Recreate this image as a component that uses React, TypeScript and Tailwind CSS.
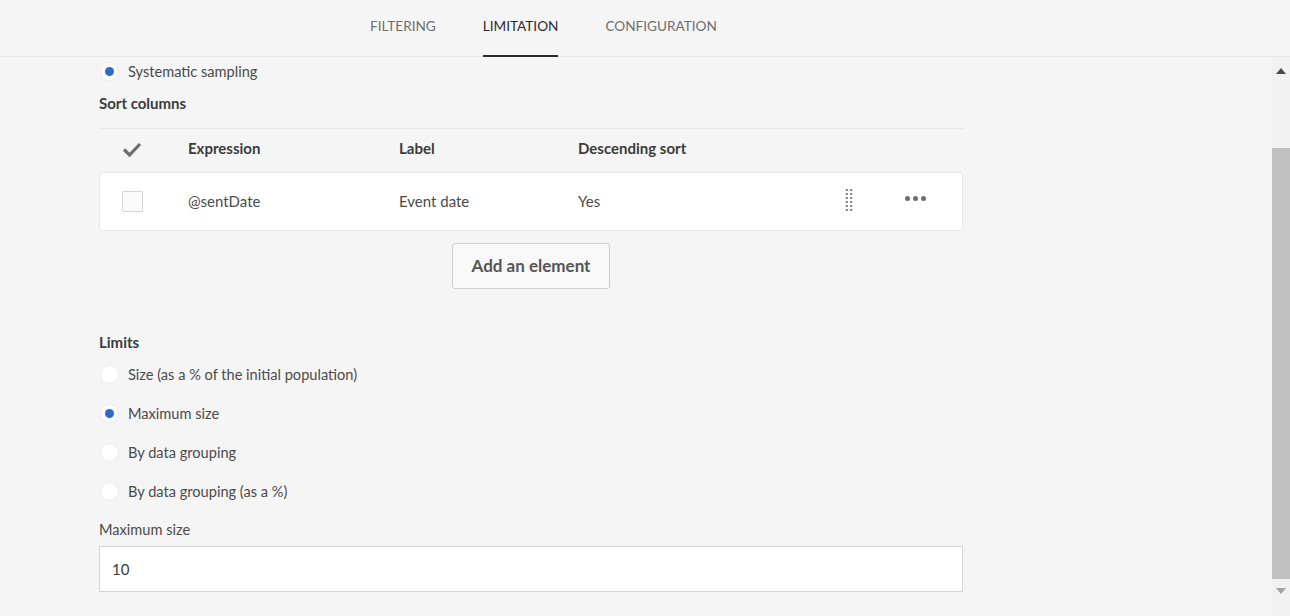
import React from 'react';

const font = { fontFamily: 'Lato, "Noto Sans", "Liberation Sans", sans-serif' };

type RadioProps = { label: string; checked?: boolean };

const Radio: React.FC<RadioProps> = ({ label, checked }) => (
  <div className="flex items-center h-[39px]">
    <span className="w-[19px] h-[19px] rounded-full bg-white border border-[#ececec] flex items-center justify-center">
      {checked && <span className="w-[9px] h-[9px] rounded-full bg-[#2d6bc7]" />}
    </span>
    <span className="ml-[9px] text-[14.6px] text-[#4b4b4b]">{label}</span>
  </div>
);

const DragHandle = () => (
  <svg width="8" height="23" viewBox="0 0 8 23">
    {[0, 1, 2, 3, 4, 5].map((r) => (
      <g key={r} fill="#7a7a7a">
        <rect x="0.8" y={1 + r * 4} width="2" height="2" />
        <rect x="5.2" y={1 + r * 4} width="2" height="2" />
      </g>
    ))}
  </svg>
);

const App: React.FC = () => {
  return (
    <div className="w-[1290px] h-[616px] bg-[#f5f5f5] overflow-hidden flex flex-col" style={font}>
      {/* Tabs */}
      <div className="h-[57px] border-b border-[#e6e6e6] flex justify-center shrink-0">
        <div className="flex gap-[47px] ml-[-203px]">
          {['FILTERING', 'LIMITATION', 'CONFIGURATION'].map((t) => (
            <div
              key={t}
              className={`h-full flex items-center text-[13.6px] pb-[3px] relative ${
                t === 'LIMITATION' ? 'text-[#2c2c2c]' : 'text-[#6e6e6e]'
              }`}
            >
              {t}
              {t === 'LIMITATION' && (
                <span className="absolute left-0 right-0 bottom-[-1px] h-[2px] bg-[#2c2c2c]" />
              )}
            </div>
          ))}
        </div>
      </div>

      <div className="flex flex-1 min-h-0">
        {/* Content */}
        <div className="flex-1 pl-[99px]">
          <div className="w-[864px]">
            <div className="mt-[-5px] ml-[1px]">
              <Radio label="Systematic sampling" checked />
            </div>
            <div className="h-[25px] flex items-center text-[15px] font-bold text-[#3c3c3c]">Sort columns</div>

            {/* Table */}
            <div className="mt-[12px] border-t border-[#e6e6e6]">
              <div className="h-[43px] pb-[4px] flex items-center text-[15px] font-bold text-[#3c3c3c]">
                <div className="w-[89px] pl-[23px] pt-[2px]">
                  <svg width="20" height="15" viewBox="0 0 20 15">
                    <path d="M2 7.5 L7.5 13 L18 2" fill="none" stroke="#6e6e6e" strokeWidth="3.2" />
                  </svg>
                </div>
                <div className="w-[211px]">Expression</div>
                <div className="w-[179px]">Label</div>
                <div>Descending sort</div>
              </div>
              <div className="h-[59px] bg-white border border-[#e8e8e8] rounded-[3px] flex items-center text-[15px] text-[#4b4b4b]">
                <div className="w-[88px] pl-[22px]">
                  <span className="block w-[21px] h-[21px] border border-[#d5d5d5] bg-[#fafafa] rounded-[1px]" />
                </div>
                <div className="w-[211px]">@sentDate</div>
                <div className="w-[179px]">Event date</div>
                <div className="w-[267px]">Yes</div>
                <div className="w-[60px] flex items-center mt-[-4px]">
                  <DragHandle />
                </div>
                <div className="flex gap-[3px] mt-[-6px]">
                  <span className="w-[5px] h-[5px] rounded-full bg-[#6e6e6e]" />
                  <span className="w-[5px] h-[5px] rounded-full bg-[#6e6e6e]" />
                  <span className="w-[5px] h-[5px] rounded-full bg-[#6e6e6e]" />
                </div>
              </div>
            </div>

            <div className="flex justify-center mt-[12px]">
              <button className="h-[46px] w-[158px] border border-[#cfcfcf] rounded-[3px] bg-[#f8f8f8] text-[17px] font-bold text-[#555555]">
                Add an element
              </button>
            </div>

            <div className="mt-[40px] h-[27px] flex items-center text-[15px] font-bold text-[#3c3c3c]">Limits</div>
            <div className="ml-[1px] mt-[-4px] pt-[3px]">
              <Radio label="Size (as a % of the initial population)" />
              <Radio label="Maximum size" checked />
              <Radio label="By data grouping" />
              <Radio label="By data grouping (as a %)" />
            </div>
            <div className="h-[20px] mt-[9px] flex items-center text-[14.6px] text-[#4b4b4b]">Maximum size</div>
            <div className="mt-[6px] h-[46px] bg-white border border-[#d3d3d3] flex items-center pl-[12px] text-[15px] text-[#3c3c3c]">
              10
            </div>
          </div>
        </div>

        {/* Scrollbar */}
        <div className="w-[18px] bg-[#f1f1f1] flex flex-col items-center">
          <div className="h-[24px] w-full flex items-center justify-center pt-[3px]">
            <span className="w-0 h-0 border-l-[5px] border-r-[5px] border-b-[6px] border-l-transparent border-r-transparent border-b-[#4a4a4a]" />
          </div>
          <div className="h-[67px]" />
          <div className="h-[431px] w-full bg-[#c1c1c1]" />
          <div className="h-[24px] w-full flex items-center justify-center">
            <span className="w-0 h-0 border-l-[5px] border-r-[5px] border-t-[6px] border-l-transparent border-r-transparent border-t-[#a3a3a3]" />
          </div>
        </div>
      </div>
    </div>
  );
};

export default App;
